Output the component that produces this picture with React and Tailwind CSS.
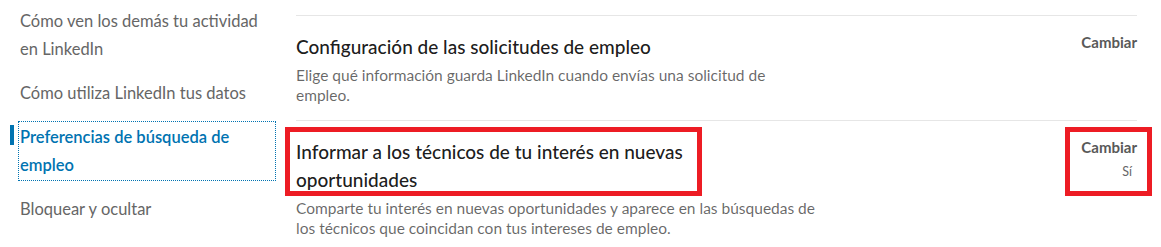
const NAV = [
  { label: "Cómo ven los demás tu actividad en LinkedIn", lines: ["Cómo ven los demás tu actividad", "en LinkedIn"] },
  { label: "Cómo utiliza LinkedIn tus datos", lines: ["Cómo utiliza LinkedIn tus datos"] },
  { label: "Preferencias de búsqueda de empleo", lines: ["Preferencias de búsqueda de", "empleo"], active: true },
  { label: "Bloquear y ocultar", lines: ["Bloquear y ocultar"] },
];

const SETTINGS = [
  {
    title: ["Configuración de las solicitudes de empleo"],
    desc: ["Elige qué información guarda LinkedIn cuando envías una solicitud de", "empleo."],
  },
  {
    title: ["Informar a los técnicos de tu interés en nuevas", "oportunidades"],
    desc: [
      "Comparte tu interés en nuevas oportunidades y aparece en las búsquedas de",
      "los técnicos que coincidan con tus intereses de empleo.",
    ],
    value: "Sí",
  },
];

const Lines = ({ lines }) =>
  lines.map((l, i) => (
    <span key={i} className="block whitespace-nowrap">
      {l}
    </span>
  ));

const SideNav = () => (
  <aside className="w-[296px] shrink-0 pt-[5px] flex flex-col gap-[12px]">
    {NAV.map((item) => (
      <div key={item.label} className="flex pl-[10px]">
        <span className={`w-[4px] h-[20px] mt-[4px] ${item.active ? "bg-[#0073b1]" : "bg-transparent"}`}></span>
        <a
          href="#"
          className={`ml-[4px] w-[258px] p-[1px] border border-dotted text-[16.5px] leading-7 ${
            item.active ? "border-[#0073b1] text-[#0073b1] font-semibold" : "border-transparent text-[#666666]"
          }`}
        >
          <Lines lines={item.lines} />
        </a>
      </div>
    ))}
  </aside>
);

const SettingRow = ({ setting }) => (
  <section className="border-t border-[#e6e6e6] pt-[17px] pb-[15px] flex justify-between">
    <div>
      <h3 className="text-[19px] leading-7 text-black/90 font-medium">
        <Lines lines={setting.title} />
      </h3>
      <p className="mt-[4px] text-[15.5px] leading-5 text-black/60">
        <Lines lines={setting.desc} />
      </p>
    </div>
    <div className="flex flex-col items-end -mt-[1px]">
      <button className="text-[15px] leading-5 font-bold text-[#595959]">Cambiar</button>
      {setting.value && (
        <span className="mt-[7px] pr-[5px] text-[12.5px] leading-4 text-[#666666]">{setting.value}</span>
      )}
    </div>
  </section>
);

export default function App() {
  return (
    <div
      className="relative w-[1161px] h-[247px] overflow-hidden bg-white flex"
      style={{ fontFamily: "Lato, 'Open Sans', sans-serif" }}
    >
      <SideNav />
      <main className="w-[841px] pt-[15px] flex flex-col">
        {SETTINGS.map((s, i) => (
          <SettingRow key={i} setting={s} />
        ))}
      </main>
      {/* annotation boxes */}
      <div className="absolute left-[285px] top-[127px] w-[417px] h-[69px] border-[5px] border-[#ed1c24] pointer-events-none"></div>
      <div className="absolute left-[1065px] top-[127px] w-[87px] h-[69px] border-[5px] border-[#ed1c24] pointer-events-none"></div>
    </div>
  );
}
